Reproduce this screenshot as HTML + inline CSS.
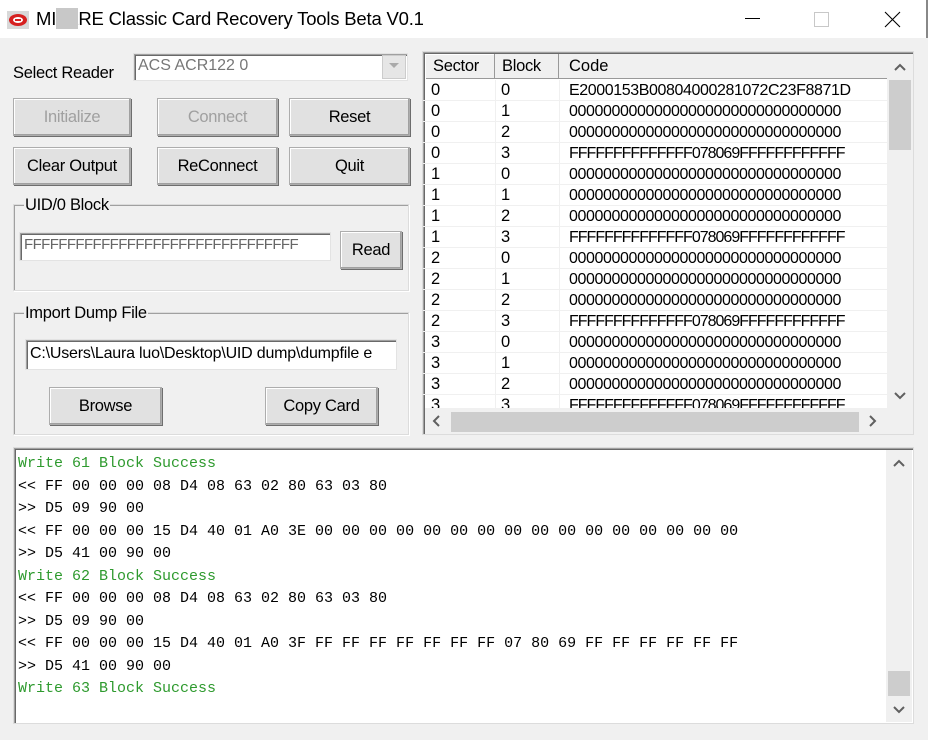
<!DOCTYPE html>
<html><head><meta charset="utf-8"><style>
*{box-sizing:border-box;margin:0;padding:0}
body{width:928px;height:740px;background:#f0f0f0;font-family:"Liberation Sans",sans-serif;font-size:16px;color:#000;position:relative;overflow:hidden}
.a{position:absolute}
.title{left:0;top:0;width:928px;height:38px;background:#fff;border-right:2px solid #888;}
.btn{position:absolute;background:#e1e1e1;border:1px solid #adadad;box-shadow:inset -1px -1px 0 #a0a0a0,inset 1px 1px 0 #fff,1px 1px 0 #6e6e6e;text-align:center;font-size:16.5px;display:flex;align-items:center;justify-content:center;letter-spacing:-0.3px}
.dis{color:#a0a0a0}
.grp{position:absolute;border:1px solid #dcdcdc;box-shadow:inset 1px 1px 0 #a0a0a0,1px 1px 0 #fff}
.lbl{position:absolute;background:#f0f0f0;font-size:16.5px;padding:0 1px;letter-spacing:-0.3px}
.inp{position:absolute;background:#fff;border:1px solid #e3e3e3;box-shadow:inset 1px 1px 0 #a0a0a0,inset 2px 2px 0 #696969;font-size:16px;padding:3px 0 0 4px;white-space:nowrap;overflow:hidden}
.row{position:absolute;left:0;height:21px;width:464px;border-bottom:1px solid #f0f0f0;font-size:16.5px;line-height:21px}
.row span{position:absolute}
.row span.c{letter-spacing:-0.4px;font-size:16px}
.mono{font-family:"Liberation Mono",monospace;font-size:15px;position:absolute;left:18px;white-space:pre;line-height:22.5px;letter-spacing:0}
.g{color:#2e9a2e}
</style></head><body>
<div class="a title"></div>
<svg class="a" style="left:7px;top:11px" width="22" height="18"><rect x="0" y="0" width="22" height="18" fill="#d8d8d8"/><ellipse cx="11" cy="9" rx="9" ry="6" fill="#d62020"/><ellipse cx="11" cy="9" rx="5" ry="3" fill="#fff"/><rect x="8" y="8" width="6" height="2" fill="#d62020"/></svg>
<div class="a" style="left:36px;top:8px;font-size:18.5px;letter-spacing:-0.2px">MI<span style="background:#c8c8c8;color:#c8c8c8">FA</span>RE Classic Card Recovery Tools Beta V0.1</div>
<div class="a" style="left:745px;top:18px;width:15px;height:1px;background:#000"></div>
<div class="a" style="left:814px;top:12px;width:15px;height:15px;border:1px solid #c8c8c8"></div>
<svg class="a" style="left:884px;top:11px" width="17" height="17"><path d="M1 1L16 16M16 1L1 16" stroke="#000" stroke-width="1.1"/></svg>

<div class="a" style="left:13px;top:64px;font-size:16.5px;letter-spacing:-0.3px">Select Reader</div>
<div class="inp" style="left:133px;top:53px;width:275px;height:28px;color:#777;padding-top:3px">ACS ACR122 0</div>
<div class="a" style="left:382px;top:55px;width:24px;height:24px;background:#e6e6e6;border:1px solid #ccc"></div>
<svg class="a" style="left:389px;top:63px" width="10" height="6"><path d="M0 0L10 0L5 5Z" fill="#aaa"/></svg>

<div class="btn dis" style="left:13px;top:98px;width:118px;height:38px">Initialize</div>
<div class="btn dis" style="left:157px;top:98px;width:121px;height:38px">Connect</div>
<div class="btn" style="left:289px;top:98px;width:121px;height:38px">Reset</div>
<div class="btn" style="left:13px;top:147px;width:118px;height:38px">Clear Output</div>
<div class="btn" style="left:157px;top:147px;width:121px;height:38px">ReConnect</div>
<div class="btn" style="left:289px;top:147px;width:121px;height:38px">Quit</div>

<div class="grp" style="left:13px;top:204px;width:396px;height:87px"></div>
<div class="lbl" style="left:24px;top:196px">UID/0 Block</div>
<div class="inp" style="left:19px;top:232px;width:312px;height:29px;color:#666;font-size:15px;letter-spacing:-0.6px">FFFFFFFFFFFFFFFFFFFFFFFFFFFFFFFF</div>
<div class="btn" style="left:340px;top:231px;width:62px;height:38px">Read</div>

<div class="grp" style="left:13px;top:312px;width:396px;height:123px"></div>
<div class="lbl" style="left:24px;top:304px">Import Dump File</div>
<div class="inp" style="left:25px;top:339px;width:372px;height:31px;padding-top:5px;letter-spacing:-0.2px">C:\Users\Laura luo\Desktop\UID dump\dumpfile e</div>
<div class="btn" style="left:49px;top:387px;width:113px;height:38px">Browse</div>
<div class="btn" style="left:265px;top:387px;width:113px;height:38px">Copy Card</div>

<!-- list -->
<div class="a" style="left:422px;top:51px;width:492px;height:384px;background:#fff;border:1px solid #dcdcdc;box-shadow:inset 1px 1px 0 #a0a0a0,inset 2px 2px 0 #696969;overflow:hidden">
 <div class="a" style="left:2px;top:2px;width:462px;height:25px;background:#f0f0f0;border-bottom:1px solid #999"></div>
 <div class="a" style="left:2px;top:2px;width:70px;height:25px;border-right:1px solid #999;box-shadow:inset 1px 1px 0 #fff;padding:3px 0 0 8px;font-size:16.5px;letter-spacing:-0.3px">Sector</div>
 <div class="a" style="left:72px;top:2px;width:64px;height:25px;border-right:1px solid #999;padding:3px 0 0 7px;font-size:16.5px;letter-spacing:-0.3px">Block</div>
 <div class="a" style="left:136px;top:2px;width:328px;height:25px;padding:3px 0 0 10px;font-size:16.5px">Code</div>
 <div class="a" style="left:0;top:28px;width:464px;height:328px;overflow:hidden">
  <div class="a" style="left:72px;top:0;width:1px;height:330px;background:#f0f0f0"></div>
  <div class="a" style="left:136px;top:0;width:1px;height:330px;background:#f0f0f0"></div>
  <div class="row" style="top:0"><span style="left:8px">0</span><span style="left:78px">0</span><span class="c" style="left:146px">E2000153B00804000281072C23F8871D</span></div>
  <div class="row" style="top:21px"><span style="left:8px">0</span><span style="left:78px">1</span><span class="c" style="left:146px">00000000000000000000000000000000</span></div>
  <div class="row" style="top:42px"><span style="left:8px">0</span><span style="left:78px">2</span><span class="c" style="left:146px">00000000000000000000000000000000</span></div>
  <div class="row" style="top:63px"><span style="left:8px">0</span><span style="left:78px">3</span><span class="c" style="left:146px;letter-spacing:-1px">FFFFFFFFFFFFFF078069FFFFFFFFFFFF</span></div>
  <div class="row" style="top:84px"><span style="left:8px">1</span><span style="left:78px">0</span><span class="c" style="left:146px">00000000000000000000000000000000</span></div>
  <div class="row" style="top:105px"><span style="left:8px">1</span><span style="left:78px">1</span><span class="c" style="left:146px">00000000000000000000000000000000</span></div>
  <div class="row" style="top:126px"><span style="left:8px">1</span><span style="left:78px">2</span><span class="c" style="left:146px">00000000000000000000000000000000</span></div>
  <div class="row" style="top:147px"><span style="left:8px">1</span><span style="left:78px">3</span><span class="c" style="left:146px;letter-spacing:-1px">FFFFFFFFFFFFFF078069FFFFFFFFFFFF</span></div>
  <div class="row" style="top:168px"><span style="left:8px">2</span><span style="left:78px">0</span><span class="c" style="left:146px">00000000000000000000000000000000</span></div>
  <div class="row" style="top:189px"><span style="left:8px">2</span><span style="left:78px">1</span><span class="c" style="left:146px">00000000000000000000000000000000</span></div>
  <div class="row" style="top:210px"><span style="left:8px">2</span><span style="left:78px">2</span><span class="c" style="left:146px">00000000000000000000000000000000</span></div>
  <div class="row" style="top:231px"><span style="left:8px">2</span><span style="left:78px">3</span><span class="c" style="left:146px;letter-spacing:-1px">FFFFFFFFFFFFFF078069FFFFFFFFFFFF</span></div>
  <div class="row" style="top:252px"><span style="left:8px">3</span><span style="left:78px">0</span><span class="c" style="left:146px">00000000000000000000000000000000</span></div>
  <div class="row" style="top:273px"><span style="left:8px">3</span><span style="left:78px">1</span><span class="c" style="left:146px">00000000000000000000000000000000</span></div>
  <div class="row" style="top:294px"><span style="left:8px">3</span><span style="left:78px">2</span><span class="c" style="left:146px">00000000000000000000000000000000</span></div>
  <div class="row" style="top:315px"><span style="left:8px">3</span><span style="left:78px">3</span><span class="c" style="left:146px;letter-spacing:-1px">FFFFFFFFFFFFFF078069FFFFFFFFFFFF</span></div>
 </div>
 <div class="a" style="left:464px;top:2px;width:26px;height:354px;background:#f0f0f0"></div>
 <div class="a" style="left:466px;top:28px;width:22px;height:70px;background:#cdcdcd"></div>
 <svg class="a" style="left:471px;top:11px" width="12" height="8"><path d="M1 7L6 2L11 7" stroke="#606060" stroke-width="2" fill="none"/></svg>
 <svg class="a" style="left:471px;top:340px" width="12" height="8"><path d="M1 1L6 6L11 1" stroke="#606060" stroke-width="2" fill="none"/></svg>
 <div class="a" style="left:2px;top:356px;width:488px;height:26px;background:#f0f0f0"></div>
 <div class="a" style="left:28px;top:360px;width:408px;height:20px;background:#cdcdcd"></div>
 <svg class="a" style="left:9px;top:363px" width="8" height="12"><path d="M7 1L2 6L7 11" stroke="#606060" stroke-width="2" fill="none"/></svg>
 <svg class="a" style="left:446px;top:363px" width="8" height="12"><path d="M1 1L6 6L1 11" stroke="#606060" stroke-width="2" fill="none"/></svg>
</div>

<!-- output -->
<div class="a" style="left:13px;top:447px;width:901px;height:277px;background:#fff;border:1px solid #dcdcdc;box-shadow:inset 1px 1px 0 #a0a0a0,inset 2px 2px 0 #696969"></div>
<div class="a" style="left:886px;top:450px;width:26px;height:272px;background:#f0f0f0"></div>
<div class="a" style="left:888px;top:671px;width:22px;height:25px;background:#cdcdcd"></div>
<svg class="a" style="left:893px;top:459px" width="12" height="8"><path d="M1 7L6 2L11 7" stroke="#606060" stroke-width="2" fill="none"/></svg>
<svg class="a" style="left:893px;top:706px" width="12" height="8"><path d="M1 1L6 6L11 1" stroke="#606060" stroke-width="2" fill="none"/></svg>
<div class="mono" style="top:453px"><span class="g">Write 61 Block Success</span>
&lt;&lt; FF 00 00 00 08 D4 08 63 02 80 63 03 80
&gt;&gt; D5 09 90 00
&lt;&lt; FF 00 00 00 15 D4 40 01 A0 3E 00 00 00 00 00 00 00 00 00 00 00 00 00 00 00 00
&gt;&gt; D5 41 00 90 00
<span class="g">Write 62 Block Success</span>
&lt;&lt; FF 00 00 00 08 D4 08 63 02 80 63 03 80
&gt;&gt; D5 09 90 00
&lt;&lt; FF 00 00 00 15 D4 40 01 A0 3F FF FF FF FF FF FF FF 07 80 69 FF FF FF FF FF FF
&gt;&gt; D5 41 00 90 00
<span class="g">Write 63 Block Success</span></div>
</body></html>
